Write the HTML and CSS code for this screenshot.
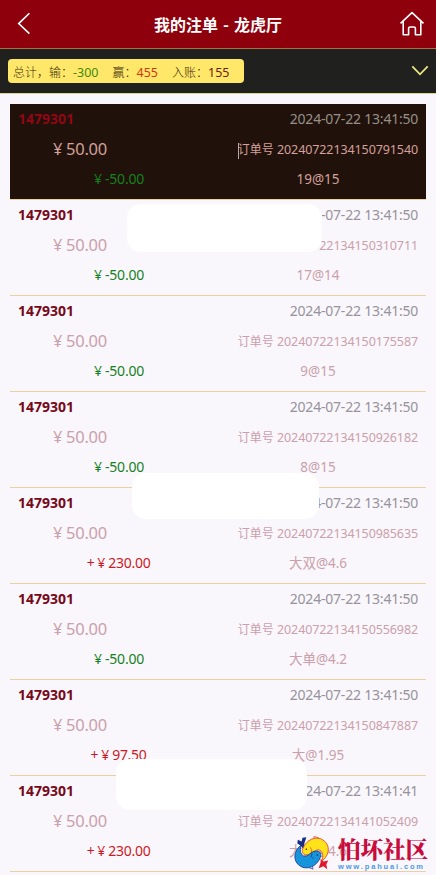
FILE: index.html
```html
<!DOCTYPE html>
<html lang="zh-CN">
<head>
<meta charset="utf-8">
<title>我的注单 - 龙虎厅</title>
<link rel="stylesheet" href="styles.css">
</head>
<body>
<header class="header">
  <svg class="back" viewBox="0 0 14 24"><path d="M12.4 1.2 1.7 11.6l10.7 10"/></svg>
  <h1>我的注单<span class="dash">-</span>龙虎厅</h1>
  <svg class="home" viewBox="0 0 26 26"><path d="M1.500 12.300 13 1.600l11.500 10.700M4.200 10v13.800h5.400v-6.300q0-1.500 1.500-1.500h3.800q1.500 0 1.500 1.500v6.300h5.400V10"/></svg>
</header>
<div class="toolbar">
  <div class="summary">
    <span>总计，输：<b class="lose">-300</b></span>
    <span>赢：<b class="win">455</b></span>
    <span>入账：<b>155</b></span>
  </div>
  <svg class="chevron" viewBox="0 0 18 12"><path d="M1.300 1.300 9 9.300l7.700-8"/></svg>
</div>
<main class="list">
  <article class="row active">
    <div class="line"><span class="id">1479301</span><time>2024-07-22 13:41:50</time></div>
    <div class="line"><span class="amount"><i>¥</i>50.00</span><span class="order caret"><em>订单号</em> 20240722134150791540</span></div>
    <div class="line half"><span class="loss"><i>¥</i>-50.00</span><span class="pick">19@15</span></div>
  </article>
  <article class="row">
    <div class="line"><span class="id">1479301</span><time>2024-07-22 13:41:50</time></div>
    <div class="line"><span class="amount"><i>¥</i>50.00</span><span class="order"><em>订单号</em> 20240722134150310711</span></div>
    <div class="line half"><span class="loss"><i>¥</i>-50.00</span><span class="pick">17@14</span></div>
    <div class="patch patch-a"></div>
  </article>
  <article class="row">
    <div class="line"><span class="id">1479301</span><time>2024-07-22 13:41:50</time></div>
    <div class="line"><span class="amount"><i>¥</i>50.00</span><span class="order"><em>订单号</em> 20240722134150175587</span></div>
    <div class="line half"><span class="loss"><i>¥</i>-50.00</span><span class="pick">9@15</span></div>
  </article>
  <article class="row">
    <div class="line"><span class="id">1479301</span><time>2024-07-22 13:41:50</time></div>
    <div class="line"><span class="amount"><i>¥</i>50.00</span><span class="order"><em>订单号</em> 20240722134150926182</span></div>
    <div class="line half"><span class="loss"><i>¥</i>-50.00</span><span class="pick">8@15</span></div>
  </article>
  <article class="row">
    <div class="line"><span class="id">1479301</span><time>2024-07-22 13:41:50</time></div>
    <div class="line"><span class="amount"><i>¥</i>50.00</span><span class="order"><em>订单号</em> 20240722134150985635</span></div>
    <div class="line half"><span class="gain">+<i>¥</i>230.00</span><span class="pick">大双@4.6</span></div>
    <div class="patch patch-b"></div>
  </article>
  <article class="row">
    <div class="line"><span class="id">1479301</span><time>2024-07-22 13:41:50</time></div>
    <div class="line"><span class="amount"><i>¥</i>50.00</span><span class="order"><em>订单号</em> 20240722134150556982</span></div>
    <div class="line half"><span class="loss"><i>¥</i>-50.00</span><span class="pick">大单@4.2</span></div>
  </article>
  <article class="row">
    <div class="line"><span class="id">1479301</span><time>2024-07-22 13:41:50</time></div>
    <div class="line"><span class="amount"><i>¥</i>50.00</span><span class="order"><em>订单号</em> 20240722134150847887</span></div>
    <div class="line half"><span class="gain">+<i>¥</i>97.50</span><span class="pick">大@1.95</span></div>
  </article>
  <article class="row">
    <div class="line"><span class="id">1479301</span><time>2024-07-22 13:41:41</time></div>
    <div class="line"><span class="amount"><i>¥</i>50.00</span><span class="order"><em>订单号</em> 20240722134141052409</span></div>
    <div class="line half"><span class="gain">+<i>¥</i>230.00</span><span class="pick">大双@4.6</span></div>
    <div class="patch patch-c"></div>
  </article>
</main>
<div class="watermark">
  <svg class="fish" viewBox="0 0 40 36">
    <path fill="#172b86" d="M10 14 7 10 3.500 8l.5-4 4 2 1-4 4-.5-2 6z"/>
    <path fill="#e3162c" d="m28 24 3 3 5-1-2 4 1 5-4-3-5 2 2-6z"/>
    <path fill="#ffe21a" stroke="#d62b2b" stroke-width=".8" d="M9 14C13 3 24 0 30 4c7 4 8 12 3 19l-4 4c2-5 2-10-2-12-5-2-7 5-13 5-5 0-6-3-5-6z"/>
    <path fill="#1695dc" stroke="#172b86" stroke-width=".8" d="M28 22c-4 11-15 14-21 10-7-4-8-12-3-19l4-4c-2 5-2 10 2 12 5 2 7-5 13-5 5 0 6 3 5 6z"/>
    <path fill="none" stroke="#d62b2b" stroke-width=".7" d="M17 12q3 2 1 6M21 2.500V.600l5 1.400"/>
    <path fill="none" stroke="#172b86" stroke-width=".7" d="M20 24q-3-2-1-6M16 33.500l4 1.500-.5-3"/>
    <circle cx="13" cy="14" r=".8" fill="#222"/><circle cx="24.500" cy="20" r=".8" fill="#222"/>
  </svg>
  <div class="brand"><strong>怕坏社区</strong><small>www.pahuai.com</small></div>
</div>
</body>
</html>
```

FILE: styles.css
```css
* { box-sizing: border-box; }
body {
  position: relative;
  margin: 0;
  width: 436px;
  height: 875px;
  overflow: hidden;
  background: #f9f7fc;
  font-family: "Noto Sans", "Noto Sans CJK SC", sans-serif;
  font-size: 14px;
}
i, em { font-style: normal; }
svg { fill: none; display: block; }
.header {
  height: 49px;
  padding: 0 11px 0 17px;
  display: flex;
  align-items: center;
  justify-content: space-between;
  background: #8e000c;
  border-bottom: 1px solid #ad7045;
}
.header h1 {
  margin: 0 0 0 6px;
  font: bold 16px/48px "Noto Sans CJK SC", sans-serif;
  color: #fff;
  white-space: nowrap;
}
.dash { display: inline-block; width: 16px; text-align: center; }
.back { width: 14px; height: 24px; stroke: #fff; stroke-width: 1.6; }
.home { width: 26px; height: 26px; stroke: #fff; stroke-width: 1.6; stroke-linejoin: round; }
.toolbar {
  height: 45px;
  padding: 0 7px 0 8px;
  display: flex;
  align-items: center;
  justify-content: space-between;
  background: #20201f;
  border-bottom: 1px solid #d6d58b;
}
.summary {
  width: 236px;
  height: 24px;
  padding-left: 5px;
  display: flex;
  gap: 14px;
  border-radius: 4px;
  background: #ffe869;
  color: #3b2a0c;
  font: 300 12px/25px "Noto Sans CJK SC", sans-serif;
  white-space: nowrap;
}
.summary b {
  font: 12.500px/24px "Noto Sans", sans-serif;
  color: #6b2010;
}
.summary .lose { color: #3f8a0c; }
.summary .win { color: #d53612; }
.chevron { width: 18px; height: 12px; stroke: #e9e583; stroke-width: 1.8; }
.list { padding: 10px 10px 0; }
.row {
  position: relative;
  height: 96px;
  padding: 0 8px;
  border-bottom: 1px solid #ecd0a0;
}
.line {
  height: 30px;
  line-height: 30px;
  display: flex;
  justify-content: space-between;
  white-space: nowrap;
}
.id { font-weight: bold; color: #75081a; }
time { color: #96939a; letter-spacing: -.2px; margin-right: -.2px; }
.amount { padding-left: 35px; font-size: 16.500px; letter-spacing: -.25px; color: #cba0a9; }
.amount i { display: inline-block; width: 13px; }
.order { font-size: 12.500px; line-height: 31px; letter-spacing: -.1px; color: #cba0a9; }
.order em { font-size: 12px; letter-spacing: 0; }
.half > span { width: 50%; text-align: center; letter-spacing: -.2px; }
.half i { display: inline-block; width: 11px; text-align: left; }
.half .loss { padding-left: 2px; color: #16801f; }
.half .gain { padding-left: 1px; letter-spacing: -.3px; color: #cf1724; }
.half .gain i { margin-left: 3px; }
.half .pick { font-size: 13.500px; letter-spacing: 0; color: #cba0a9; }
.active { background: #20120b; }
.active .id { color: #8f0715; }
.active time { color: #96908a; }
.active .amount, .active .order, .active .pick { color: #d5a09b; }
.caret::before {
  content: "";
  display: inline-block;
  width: 1px;
  height: 16px;
  margin-right: -1px;
  vertical-align: middle;
  background: #b9aaa0;
}
.patch { position: absolute; background: #fff; border-radius: 14px; }
.patch-a { left: 117px; top: 4px; width: 195px; height: 48px; }
.patch-b { left: 122px; top: -15px; width: 187px; height: 46px; }
.patch-c { left: 106px; top: -17px; width: 191px; height: 51px; }
.watermark {
  position: absolute;
  left: 294px;
  top: 835px;
  display: flex;
}
.fish { width: 38px; height: 36px; }
.brand { width: 92px; margin-left: 6px; }
.brand strong {
  display: block;
  font: 900 22.500px/27px "Noto Serif CJK SC", "Noto Sans CJK SC", serif;
  color: #c90b3c;
  white-space: nowrap;
}
.brand small {
  display: block;
  font: bold 7.500px/9px "Liberation Sans", sans-serif;
  letter-spacing: 1.850px;
  color: #4b9ae6;
  white-space: nowrap;
}
```
